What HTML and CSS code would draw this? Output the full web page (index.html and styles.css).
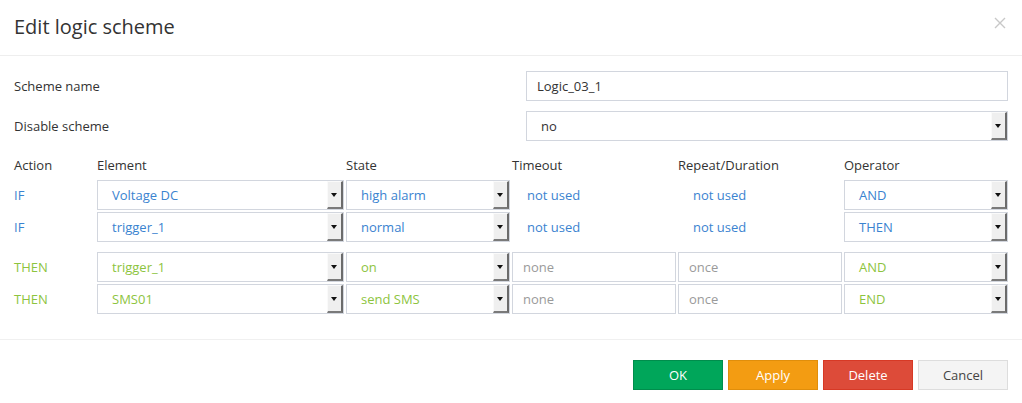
FILE: index.html
```html
<!DOCTYPE html>
<html>
<head>
    <meta charset="utf-8">
    <title>Edit logic scheme</title>
    <link rel="stylesheet" href="styles.css">
</head>
<body>
    <div class="modal">
        <div class="modal-header">
            <h4 class="title">Edit logic scheme</h4>
            <span class="close">
                <svg width="12" height="12" viewBox="0 0 12 12"><path d="M1 1L11 11M11 1L1 11" stroke="#c8c8c8" stroke-width="1.4" fill="none"/></svg>
            </span>
        </div>
        <div class="modal-body">
            <div class="form-row">
                <label>Scheme name</label>
                <div class="input">Logic_03_1</div>
            </div>
            <div class="form-row">
                <label>Disable scheme</label>
                <div class="select dark"><span>no</span><i class="btn"></i></div>
            </div>

            <div class="grid head">
                <div>Action</div>
                <div>Element</div>
                <div>State</div>
                <div>Timeout</div>
                <div>Repeat/Duration</div>
                <div>Operator</div>
            </div>

            <div class="grid row blue">
                <div class="act">IF</div>
                <div class="select"><span>Voltage DC</span><i class="btn"></i></div>
                <div class="select"><span>high alarm</span><i class="btn"></i></div>
                <div class="plain">not used</div>
                <div class="plain">not used</div>
                <div class="select"><span>AND</span><i class="btn"></i></div>
            </div>
            <div class="grid row blue">
                <div class="act">IF</div>
                <div class="select"><span>trigger_1</span><i class="btn"></i></div>
                <div class="select"><span>normal</span><i class="btn"></i></div>
                <div class="plain">not used</div>
                <div class="plain">not used</div>
                <div class="select"><span>THEN</span><i class="btn"></i></div>
            </div>

            <div class="grid row green first">
                <div class="act">THEN</div>
                <div class="select"><span>trigger_1</span><i class="btn"></i></div>
                <div class="select"><span>on</span><i class="btn"></i></div>
                <div class="input muted">none</div>
                <div class="input muted">once</div>
                <div class="select"><span>AND</span><i class="btn"></i></div>
            </div>
            <div class="grid row green">
                <div class="act">THEN</div>
                <div class="select"><span>SMS01</span><i class="btn"></i></div>
                <div class="select"><span>send SMS</span><i class="btn"></i></div>
                <div class="input muted">none</div>
                <div class="input muted">once</div>
                <div class="select"><span>END</span><i class="btn"></i></div>
            </div>
        </div>
        <div class="modal-footer">
            <button class="b ok">OK</button>
            <button class="b apply">Apply</button>
            <button class="b delete">Delete</button>
            <button class="b cancel">Cancel</button>
        </div>
    </div>
</body>
</html>
```

FILE: styles.css
```css
* {
    margin: 0;
    padding: 0;
    box-sizing: border-box;
}

body {
    background: #fff;
    font-family: "Open Sans", "Noto Sans", sans-serif;
    font-size: 13px;
    color: #333;
}

.modal-header {
    height: 56px;
    border-bottom: 1px solid #eeeeee;
    display: flex;
    align-items: center;
    justify-content: space-between;
    padding: 0 15px 2px 14px;
}

.title {
    font-size: 20px;
    font-weight: normal;
    color: #333;
}

.close {
    display: block;
    height: 12px;
    margin-top: -12px;
    margin-right: 1px;
}

.modal-body {
    padding: 15px 14px 23px 14px;
}

.form-row {
    display: grid;
    grid-template-columns: 512px 1fr;
    align-items: center;
    margin-bottom: 10px;
}

.input,
.select {
    height: 30px;
    border: 1px solid #d2d6de;
    display: flex;
    align-items: center;
    padding-left: 10px;
    color: #333;
}

.select {
    padding-left: 14px;
    justify-content: space-between;
}

.select .btn {
    display: block;
    width: 16px;
    height: 28px;
    background: #efefef;
    border-style: solid;
    border-width: 1px 2px 2px 1px;
    border-color: #fafafa #6b6b6b #7a7a7a #fafafa;
    position: relative;
}

.select .btn:after {
    content: "";
    position: absolute;
    left: 3px;
    top: 11px;
    border-left: 3px solid transparent;
    border-right: 3px solid transparent;
    border-top: 4px solid #111;
}

.grid {
    display: grid;
    grid-template-columns: 81px 247px 164px 164px 164px 164px;
    column-gap: 2px;
    align-items: center;
}

.head {
    height: 28px;
    margin-bottom: 1px;
}

.row {
    height: 30px;
    margin-bottom: 2px;
}

.row.first {
    margin-top: 10px;
}

.plain {
    padding-left: 15px;
}

.blue,
.blue .select {
    color: #3a83d0;
}

.green,
.green .select {
    color: #8dc43e;
}

.input.muted {
    color: #9a9a9a;
}

.modal-footer {
    border-top: 1px solid #f0f0f0;
    padding: 20px 14px 0 14px;
    display: flex;
    justify-content: flex-end;
    gap: 5px;
}

.b {
    width: 90px;
    height: 30px;
    font-family: "Open Sans", "Noto Sans", sans-serif;
    font-size: 13px;
    color: #fff;
    border: 1px solid;
    cursor: pointer;
}

.ok {
    background: #00a65a;
    border-color: #008d4c;
}

.apply {
    background: #f39c12;
    border-color: #e08e0b;
}

.delete {
    background: #dd4b39;
    border-color: #d73925;
}

.cancel {
    background: #f4f4f4;
    border-color: #dddddd;
    color: #444;
}
```
